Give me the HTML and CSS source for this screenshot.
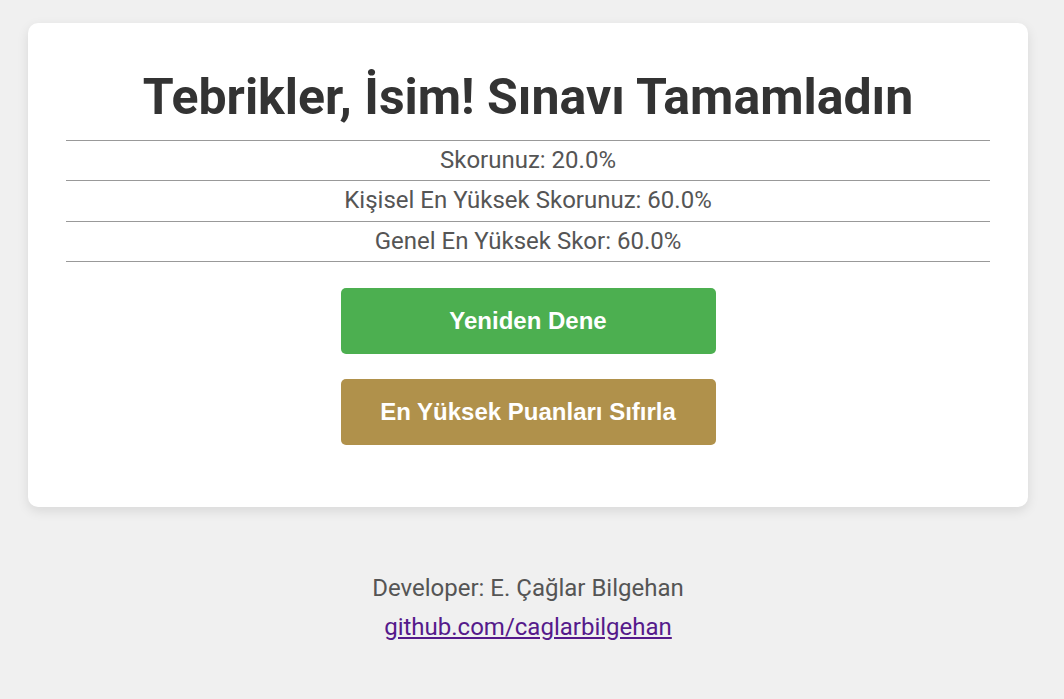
FILE: index.html
```html
<!DOCTYPE html>
<html lang="tr">
<head>
<meta charset="utf-8">
<title>Sonuç</title>
<link rel="stylesheet" href="styles.css">
</head>
<body>
<main class="card">
  <h1 class="title">Tebrikler, İsim! Sınavı Tamamladın</h1>
  <div class="scores">
    <p class="row">Skorunuz: 20.0%</p>
    <p class="row">Kişisel En Yüksek Skorunuz: 60.0%</p>
    <p class="row">Genel En Yüksek Skor: 60.0%</p>
  </div>
  <div class="actions">
    <button class="btn btn-green">Yeniden Dene</button>
    <button class="btn btn-gold">En Yüksek Puanları Sıfırla</button>
  </div>
</main>
<footer class="footer">
  <p class="dev">Developer: E. Çağlar Bilgehan</p>
  <a class="link" href="#">github.com/caglarbilgehan</a>
</footer>
</body>
</html>
```
FILE: styles.css
```css
* { box-sizing: border-box; }
html, body { margin: 0; padding: 0; }
body {
  background: #f0f0f0;
  font-family: Roboto, "Liberation Sans", sans-serif;
  color: #555;
  padding: 23px 0 0 28px;
  min-height: 699px;
}
.card {
  width: 1000px;
  background: #fff;
  border-radius: 10px;
  box-shadow: 0 4px 12px rgba(0,0,0,0.1);
  padding: 44px 38px 62px;
}
.title {
  margin: 0 0 13px;
  text-align: center;
  font-size: 50px;
  font-weight: 700;
  color: #333;
  line-height: 60px;
}
.scores {
  border-top: 1px solid #999;
}
.row {
  margin: 0;
  text-align: center;
  font-size: 24px;
  line-height: 39.3px;
  color: #555;
  border-bottom: 1px solid #999;
}
.actions {
  display: flex;
  flex-direction: column;
  align-items: center;
  gap: 25px;
  margin-top: 26px;
}
.btn {
  width: 375px;
  height: 66px;
  border: none;
  border-radius: 5px;
  color: #fff;
  font-family: "Liberation Sans", Arial, sans-serif;
  font-weight: 700;
  font-size: 24px;
}
.btn-green { background: #4caf50; }
.btn-gold { background: #b0914b; }
.footer {
  width: 1000px;
  text-align: center;
  padding-top: 66px;
}
.dev {
  margin: 0 0 9px;
  font-size: 24px;
  color: #555;
  line-height: 30px;
}
.link {
  font-size: 24px;
  color: #551a8b;
  line-height: 30px;
}
```
